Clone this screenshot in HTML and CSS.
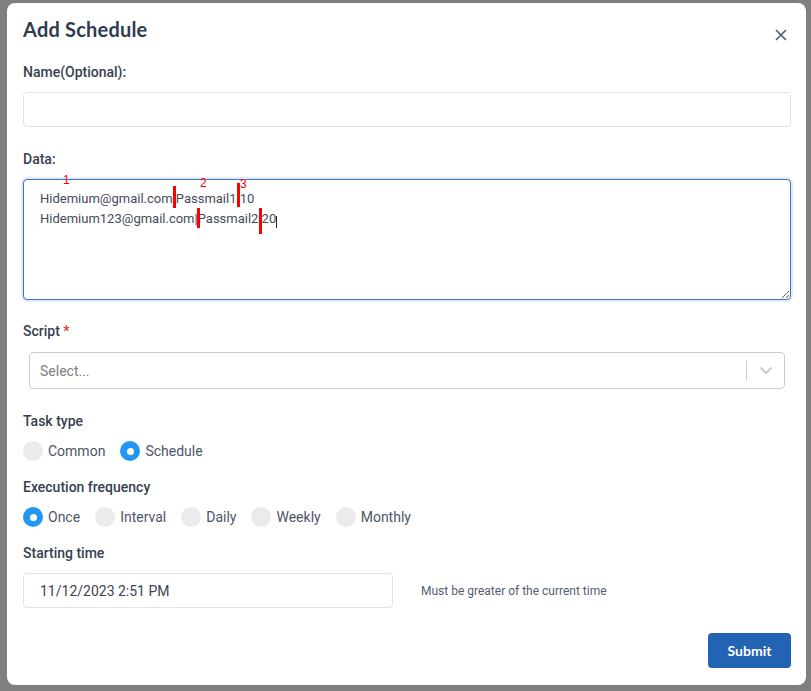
FILE: index.html
```html
<!DOCTYPE html>
<html lang="en">
<head>
<meta charset="utf-8">
<title>Add Schedule</title>
<link rel="stylesheet" href="styles.css">
</head>
<body>
<div class="backdrop">
  <div class="modal">
    <div class="modal-header">
      <h1 class="title">Add Schedule</h1>
      <button class="close" aria-label="Close">
        <svg width="12" height="12" viewBox="0 0 12 12"><path d="M1 1 L11 11 M11 1 L1 11" stroke="#475a70" stroke-width="1.6" fill="none"/></svg>
      </button>
    </div>

    <form class="form">
      <label class="label">Name(Optional):</label>
      <input class="input" type="text">

      <label class="label gap-lg">Data:</label>
      <div class="data-wrap">
        <textarea class="textarea">Hidemium@gmail.com|Passmail1|10
Hidemium123@gmail.com|Passmail2|20</textarea>
        <span class="mark-num n1">1</span>
        <span class="mark-num n2">2</span>
        <span class="mark-num n3">3</span>
        <span class="mark-bar b1"></span>
        <span class="mark-bar b2"></span>
        <span class="mark-bar b3"></span>
        <span class="mark-bar b4"></span>
        <span class="caret"></span>
      </div>

      <label class="label gap-script">Script <span class="req">*</span></label>
      <div class="select">
        <span class="placeholder">Select...</span>
        <span class="select-sep"></span>
        <span class="select-arrow">
          <svg width="14" height="9" viewBox="0 0 14 9"><path d="M1.5 1.5 L7 7 L12.5 1.5" stroke="#cccccc" stroke-width="2" fill="none"/></svg>
        </span>
      </div>

      <label class="label gap-lg">Task type</label>
      <div class="radios">
        <span class="radio"><span class="dot"></span>Common</span>
        <span class="radio"><span class="dot on"></span>Schedule</span>
      </div>

      <label class="label gap-md">Execution frequency</label>
      <div class="radios">
        <span class="radio"><span class="dot on"></span>Once</span>
        <span class="radio"><span class="dot"></span>Interval</span>
        <span class="radio"><span class="dot"></span>Daily</span>
        <span class="radio"><span class="dot"></span>Weekly</span>
        <span class="radio"><span class="dot"></span>Monthly</span>
      </div>

      <label class="label gap-md">Starting time</label>
      <div class="time-row">
        <div class="input date">11/12/2023 2:51 PM</div>
        <span class="hint">Must be greater of the current time</span>
      </div>

      <div class="actions">
        <button type="button" class="submit">Submit</button>
      </div>
    </form>
  </div>
</div>
</body>
</html>
```

FILE: styles.css
```css
* { box-sizing: border-box; }

html, body {
  margin: 0;
  padding: 0;
  height: 100%;
}

body {
  background-color: #7f7f7f;
  font-family: Roboto, "Liberation Sans", sans-serif;
  overflow: hidden;
}

.backdrop {
  padding: 3px 5px 0 7px;
}

.modal {
  width: 799px;
  height: 682px;
  background: #ffffff;
  border-radius: 8px;
  padding: 12px 15px 0 16px;
  display: flex;
  flex-direction: column;
}

.modal-header {
  display: flex;
  justify-content: space-between;
  align-items: flex-start;
  height: 28px;
}

.title {
  margin: 0;
  font-family: Lato, "Open Sans", sans-serif;
  font-weight: 700;
  font-size: 20px;
  line-height: 28px;
  color: #2f3c4f;
  letter-spacing: 0.2px;
}

.close {
  border: 0;
  background: none;
  padding: 0;
  margin: 14px 4px 0 0;
  width: 12px;
  height: 12px;
  display: flex;
}

.form {
  display: flex;
  flex-direction: column;
  margin-top: 19px;
}

.label {
  display: block;
  font-size: 14px;
  line-height: 20px;
  font-weight: 500;
  color: #363f4f;
  margin-bottom: 10px;
}

.gap-lg { margin-top: 22px; }
.gap-script { margin-top: 21px; margin-bottom: 11px; }
.gap-md { margin-top: 16px; }

.req { color: #e53935; }

.input {
  width: 100%;
  height: 35px;
  border: 1px solid #dfe3eb;
  border-radius: 4px;
  background: #fff;
  font-family: Roboto, "Liberation Sans", sans-serif;
  font-size: 14px;
  outline: none;
}

.data-wrap {
  position: relative;
  height: 121px;
}

.textarea {
  display: block;
  width: 100%;
  height: 121px;
  border: 1px solid #3d72c6;
  border-radius: 4px;
  box-shadow: 0 0 0 2px #e3ebf7;
  padding: 9px 16px;
  font-family: Roboto, "Liberation Sans", sans-serif;
  font-size: 13px;
  line-height: 20px;
  color: #444b5a;
  outline: none;
  resize: vertical;
}

.mark-num {
  position: absolute;
  color: #ff0000;
  font-family: "Liberation Sans", sans-serif;
  font-size: 12px;
  line-height: 12px;
}
.n1 { left: 40px; top: -5px; }
.n2 { left: 177px; top: -2px; }
.n3 { left: 217px; top: -1px; }

.mark-bar {
  position: absolute;
  width: 3px;
  background: #ff0000;
}
.b1 { left: 150px; top: 7px; height: 22px; }
.b2 { left: 214px; top: 4px; height: 24px; }
.b3 { left: 174px; top: 29px; height: 20px; }
.b4 { left: 236px; top: 29px; height: 26px; }

.caret {
  position: absolute;
  left: 253px;
  top: 37px;
  width: 1px;
  height: 12px;
  background: #222;
}

.select {
  margin: 0 6px;
  height: 37px;
  border: 1px solid #cccccc;
  border-radius: 4px;
  display: flex;
  align-items: center;
  padding-left: 10px;
}

.placeholder {
  flex: 1;
  font-size: 14px;
  color: #808080;
}

.select-sep {
  width: 1px;
  height: 20px;
  background: #cccccc;
}

.select-arrow {
  width: 37px;
  display: flex;
  justify-content: center;
  align-items: center;
}

.radios {
  display: flex;
  gap: 15px;
  height: 20px;
  align-items: center;
}

.radio {
  display: flex;
  align-items: center;
  gap: 5px;
  font-size: 14px;
  color: #4d5568;
}

.dot {
  width: 20px;
  height: 20px;
  border-radius: 50%;
  background: #ebebeb;
  display: inline-block;
}

.dot.on {
  background: #2196f3;
  position: relative;
}

.dot.on::after {
  content: "";
  position: absolute;
  left: 6.5px;
  top: 6.5px;
  width: 7px;
  height: 7px;
  border-radius: 50%;
  background: #fff;
}

.time-row {
  display: flex;
  align-items: center;
}

.date {
  width: 370px;
  display: flex;
  align-items: center;
  padding-left: 16px;
  font-size: 14px;
  color: #3d4452;
}

.hint {
  margin-left: 28px;
  font-size: 12px;
  color: #565e70;
}

.actions {
  display: flex;
  justify-content: flex-end;
  margin-top: 25px;
}

.submit {
  width: 83px;
  height: 35px;
  border: 0;
  border-radius: 4px;
  background: #2263b3;
  color: #fff;
  font-family: Lato, "Open Sans", sans-serif;
  font-weight: 700;
  font-size: 14px;
  cursor: pointer;
}
```
